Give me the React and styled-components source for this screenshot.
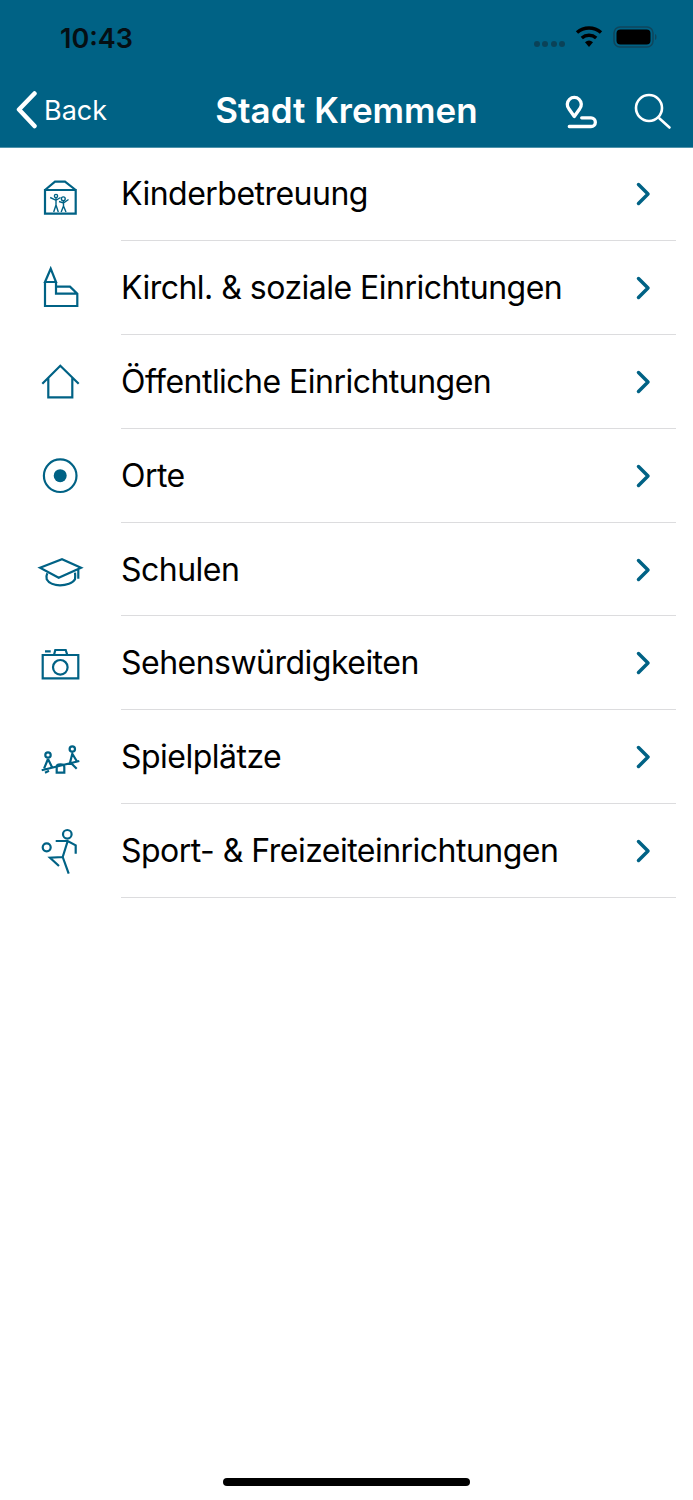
import React from "react";
import styled, { createGlobalStyle } from "styled-components";

const Global = createGlobalStyle`
  html, body { margin: 0; padding: 0; background: #fff; }
  body { font-family: Inter, "Liberation Sans", sans-serif; }
`;
const Page = styled.div`
  width: 693px; height: 1500px; display: flex; flex-direction: column; background: #fff; overflow: hidden;
`;
const Header = styled.header`
  background: #006285; height: 147.5px; box-sizing: border-box; display: flex; flex-direction: column; flex: none;
  border-bottom: 1px solid #4f93ab;
`;
const StatusBar = styled.div`
  height: 75px; display: flex; align-items: flex-start; justify-content: space-between; padding: 0 35px 0 60px;
`;
const Time = styled.span`
  font: 600 27px/1 Inter, sans-serif; color: #050f14; margin-top: 25px;
`;
const StatusIcons = styled.div`
  display: flex; align-items: center; gap: 9px; margin-top: 25px;
`;
const Dots = styled.div`
  display: flex; gap: 2.500px; margin-top: 13px;
  i { width: 6px; height: 6px; border-radius: 50%; background: #0a4258; display: block; }
`;
const Nav = styled.div`
  height: 70px; display: grid; grid-template-columns: 1fr auto 1fr; align-items: center;
`;
const BackLink = styled.div`
  display: flex; align-items: center; gap: 5px; padding-left: 15px; color: #fff;
  font: 400 27px/1 Inter, sans-serif;
`;
const Title = styled.h1`
  margin: 0; color: #fff; font: 600 35px/1 Inter, sans-serif;
`;
const Actions = styled.div`
  display: flex; justify-content: flex-end; align-items: center; gap: 35px; padding: 3px 21px 0 0;
`;
const List = styled.ul`
  list-style: none; margin: 0; padding: 0; flex: 1;
`;
const Row = styled.li`
  display: flex; align-items: stretch; height: 93.8px;
`;
const IconCell = styled.div`
  width: 121px; flex: none; padding: 1px 0 0 20px; box-sizing: border-box; display: flex; align-items: center;
`;
const RowBody = styled.div`
  flex: 1; display: flex; align-items: center; justify-content: space-between; margin-right: 17px;
  border-bottom: 1px solid #dcdcde; padding: 1px 24px 0 0;
`;
const Label = styled.span`
  font: 400 32px/1 Inter, sans-serif; color: #000; letter-spacing: -0.52px;
`;
const HomeBar = styled.div`
  width: 247px; height: 8px; border-radius: 4px; background: #000; align-self: center; margin-bottom: 14px; flex: none;
`;

const Glyph = ({ children }) => (
  <svg width="80" height="80" viewBox="0 0 80 80" fill="none" stroke="#006285" strokeWidth="2.200" strokeLinejoin="miter">{children}</svg>
);

const icons = {
  kids: (
    <Glyph>
      <path d="M25 35h30.700v23.700H25zM25 35l10-8.300h10L55.700 35" />
      <g strokeWidth="1.400">
        <circle cx="36" cy="41" r="1.600" />
        <path d="M30.200 42.500l5.800 2.800 4.500-2.800M36 43v7M36 50l-2.300 7M36 50l2.300 7" />
        <circle cx="43.300" cy="43.800" r="1.900" />
        <path d="M39 46.500l4.500 1.500 5-3.500M43.500 46v5.500M43.500 51l-2.300 6M43.500 51l2.500 6" />
      </g>
    </Glyph>
  ),
  church: (
    <Glyph>
      <path d="M30.700 19.700L25 33h11zM25 33v24h32.300V44.700L50 37.700H36M36 33v11.700h21.300" />
    </Glyph>
  ),
  house: (
    <Glyph>
      <path d="M22.300 41.700l18-18 18.400 18M28.300 35.700v19.600h24V35.700" />
    </Glyph>
  ),
  place: (
    <Glyph>
      <circle cx="40.200" cy="39.700" r="16.300" />
      <circle cx="40.200" cy="39.700" r="6.500" fill="#006285" stroke="none" />
    </Glyph>
  ),
  school: (
    <Glyph>
      <path d="M20 37.700l22-8.400 19 8.400-22.300 10zM58.300 38.300v10.400M27.300 43.300c-1 2-1 4.500-.6 6 2 4 8 6 13.300 6 6 0 13-2 15-6 .4-2 .3-4 0-6.600" />
    </Glyph>
  ),
  camera: (
    <Glyph>
      <path d="M22.700 31h35.600v23.300H22.700zM34 31l1.300-5h10.400l1.600 5M25 27.300h5.700" />
      <circle cx="40.300" cy="43.300" r="7.300" />
    </Glyph>
  ),
  play: (
    <Glyph>
      <circle cx="28" cy="37" r="2.700" />
      <circle cx="52.300" cy="31" r="2.700" />
      <path d="M21.700 52.300l37.600-9.300M28 41l-4 9.700M28 41l4.300 8.700M25 54.700l4-2M50 44.700l2.300-9 4.400 7.300M51 45l5.700 5.700" />
      <path d="M36.700 54.700v-6c0-3 7.600-3 7.600 0v6z" />
    </Glyph>
  ),
  sport: (
    <Glyph>
      <circle cx="47.300" cy="23.300" r="4.300" />
      <circle cx="26.700" cy="36.300" r="4" />
      <path d="M35.700 30h12l8 4.300v8.400M47.700 30l-5 16-12.700.7 9 8.300M42.700 46l6 16.700" />
    </Glyph>
  ),
};

const items = [
  ["kids", "Kinderbetreuung"],
  ["church", "Kirchl. & soziale Einrichtungen"],
  ["house", "Öffentliche Einrichtungen"],
  ["place", "Orte"],
  ["school", "Schulen"],
  ["camera", "Sehenswürdigkeiten"],
  ["play", "Spielplätze"],
  ["sport", "Sport- & Freizeiteinrichtungen"],
];

export default function App() {
  return (
    <Page>
      <Global />
      <Header>
        <StatusBar>
          <Time>10:43</Time>
          <StatusIcons>
            <Dots><i /><i /><i /><i /></Dots>
            <svg width="30" height="24" viewBox="0 0 30 24">
              <path d="M15 22l-4-4.800a6.200 6.200 0 0 1 8 0z" fill="#000" />
              <path d="M7.800 13a11 11 0 0 1 14.400 0M3 7.500a18.500 18.500 0 0 1 24 0" stroke="#000" strokeWidth="3.500" fill="none" />
            </svg>
            <svg width="45" height="24" viewBox="0 0 45 24">
              <rect x="1" y="2" width="39" height="20" rx="6" fill="none" stroke="#0f465c" strokeWidth="1.500" />
              <rect x="3.500" y="4.500" width="34" height="15" rx="4" fill="#000" />
              <path d="M42 9c2 .5 2 5.500 0 6z" fill="#0f465c" />
            </svg>
          </StatusIcons>
        </StatusBar>
        <Nav>
          <BackLink>
            <svg width="24" height="38" viewBox="0 0 24 38" fill="none" stroke="#fff" strokeWidth="4.500" strokeLinecap="round" strokeLinejoin="round">
              <path d="M19.500 2.500L4 18.500 19.500 35" />
            </svg>
            Back
          </BackLink>
          <Title>Stadt Kremmen</Title>
          <Actions>
            <svg width="34" height="38" viewBox="0 0 34 38" fill="none" stroke="#fff" strokeWidth="3.300" strokeLinecap="round">
              <path d="M9.300 23.500L4 16a7 7 0 1 1 10.600 0z" strokeLinejoin="round" />
              <path d="M4.300 33.500H26a4.350 4.350 0 0 0 0-8.700h-9.300" />
            </svg>
            <svg width="38" height="38" viewBox="0 0 38 38" fill="none" stroke="#fff" strokeWidth="2.600" strokeLinecap="round">
              <circle cx="15" cy="15" r="13" />
              <path d="M25.500 25.500l10 9" />
            </svg>
          </Actions>
        </Nav>
      </Header>
      <List>
        {items.map(([icon, label]) => (
          <Row key={label}>
            <IconCell>{icons[icon]}</IconCell>
            <RowBody>
              <Label>{label}</Label>
              <svg width="18" height="26" viewBox="0 0 18 26" fill="none" stroke="#006285" strokeWidth="3.500" strokeLinecap="round" strokeLinejoin="round">
                <path d="M4.500 3.500l9.500 9.500-9.500 9.500" />
              </svg>
            </RowBody>
          </Row>
        ))}
      </List>
      <HomeBar />
    </Page>
  );
}
